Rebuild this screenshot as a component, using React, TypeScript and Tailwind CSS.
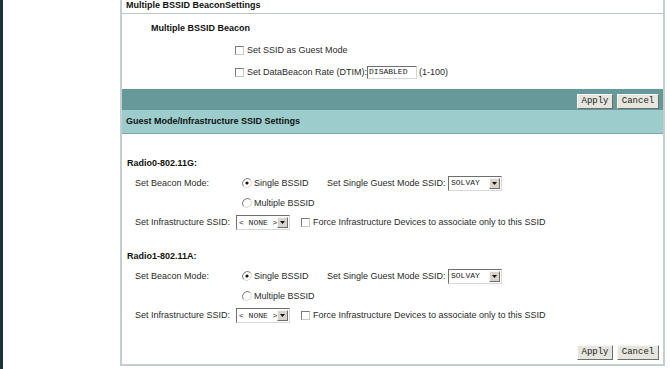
import React from 'react';

const Check = () => (
  <span className="inline-block w-[9px] h-[9px] shrink-0 border border-t-[#7a7a7a] border-l-[#7a7a7a] border-r-[#c8c8c8] border-b-[#c8c8c8] bg-white" />
);

const Radio = ({ checked }: { checked?: boolean }) => (
  <svg width="10" height="10" viewBox="0 0 12 12" className="shrink-0">
    <circle cx="6" cy="6" r="5" fill="#fff" />
    <path d="M10.2 1.8 A6 6 0 0 0 1.8 10.2" stroke="#7a7a7a" strokeWidth="1.2" fill="none" />
    <path d="M1.8 10.2 A6 6 0 0 0 10.2 1.8" stroke="#d8d8d8" strokeWidth="1.2" fill="none" />
    {checked && <circle cx="6" cy="6" r="1.9" fill="#111" />}
  </svg>
);

const Select = ({ value, className }: { value: string; className: string }) => (
  <span
    className={`inline-flex items-center h-[15px] shrink-0 border border-t-[#6e6e6e] border-l-[#6e6e6e] border-r-[#d8d8d8] border-b-[#d8d8d8] bg-white ${className}`}
  >
    <span className="flex-1 pl-[2px] whitespace-pre font-[family-name:'Liberation_Mono',monospace] text-[8px] text-[#222] leading-none">
      {value}
    </span>
    <span className="w-[11px] h-[11px] mr-[1px] shrink-0 flex items-center justify-center bg-[#d8d4cc] border border-t-[#f4f4f4] border-l-[#f4f4f4] border-r-[#6e6e6e] border-b-[#6e6e6e]">
      <svg width="5" height="3" viewBox="0 0 5 3">
        <path d="M0 0 H5 L2.5 3 Z" fill="#111" />
      </svg>
    </span>
  </span>
);

const Btn = ({ label, className }: { label: string; className: string }) => (
  <button
    className={`h-[15px] flex items-center justify-center bg-[#e6e6de] border border-t-[#fafafa] border-l-[#fafafa] border-r-[#6e6e6e] border-b-[#6e6e6e] font-[family-name:'Liberation_Mono',monospace] text-[9px] text-[#222] ${className}`}
  >
    {label}
  </button>
);

const Buttons = () => (
  <div className="flex justify-end gap-[4px] pr-[4px]">
    <Btn label="Apply" className="w-[36px]" />
    <Btn label="Cancel" className="w-[42px]" />
  </div>
);

const RadioSection = ({ title }: { title: string }) => (
  <div className="flex flex-col">
    <div className="h-[20px] flex items-center pl-[5px] font-bold text-[#111]">{title}</div>
    <div className="h-[20px] flex items-center pl-[13px]">
      <span className="w-[107px]">Set Beacon Mode:</span>
      <span className="w-[85px] flex items-center gap-[1px]">
        <Radio checked />
        <span className="ml-[1px]">Single BSSID</span>
      </span>
      <span className="w-[121px]">Set Single Guest Mode SSID:</span>
      <Select value="SOLVAY" className="w-[54px]" />
    </div>
    <div className="h-[20px] flex items-center pl-[120px]">
      <span className="flex items-center gap-[2px]">
        <Radio />
        <span>Multiple BSSID</span>
      </span>
    </div>
    <div className="h-[19px] flex items-center pl-[13px]">
      <span className="w-[101px]">Set Infrastructure SSID:</span>
      <Select value="< NONE >" className="w-[54px]" />
      <span className="ml-[11px] flex items-center gap-[2px]">
        <Check />
        <span className="ml-[1px]">Force Infrastructure Devices to associate only to this SSID</span>
      </span>
    </div>
  </div>
);

export default function App() {
  return (
    <div className="w-[670px] h-[369px] flex bg-white overflow-hidden font-[family-name:'Liberation_Sans',Arial,sans-serif] text-[9px] text-[#2a2a2a] leading-none">
      <div className="w-[3px] bg-[#173535]" />
      <div className="w-[117px]" />
      <div className="w-[545px] h-[366px] flex flex-col border-l-2 border-r-2 border-b-2 border-[#c3cfcf]">
        <div className="h-[14px] flex items-center pl-[4px] pb-[2px] font-bold text-[#111] border-b border-[#b8c8c8]">
          Multiple BSSID BeaconSettings
        </div>
        <div className="h-[75px] flex flex-col">
          <div className="h-[16px] mt-[6px] flex items-center pl-[29px] font-bold text-[#111]">
            Multiple BSSID Beacon
          </div>
          <div className="h-[16px] mt-[6px] flex items-center gap-[2px] pl-[113px]">
            <Check />
            <span className="ml-[1px]">Set SSID as Guest Mode</span>
          </div>
          <div className="h-[16px] mt-[6px] flex items-center pl-[113px]">
            <Check />
            <span className="ml-[3px]">Set DataBeacon Rate (DTIM):</span>
            <span className="w-[50px] h-[13px] flex items-center border border-t-[#6e6e6e] border-l-[#6e6e6e] border-r-[#d8d8d8] border-b-[#d8d8d8] bg-white pl-[1px] font-[family-name:'Liberation_Mono',monospace] text-[8px] text-[#222]">
              DISABLED
            </span>
            <span className="ml-[2px]">(1-100)</span>
          </div>
        </div>
        <div className="h-[21px] flex items-center justify-end bg-[#669999] pt-[3px]">
          <Buttons />
        </div>
        <div className="h-[24px] flex items-center pl-[4px] bg-[#9ccccc] border-b border-[#7fa9a9] font-bold text-[#111]">
          Guest Mode/Infrastructure SSID Settings
        </div>
        <div className="flex flex-col pt-[19px]">
          <RadioSection title="Radio0-802.11G:" />
          <div className="h-[14px]" />
          <RadioSection title="Radio1-802.11A:" />
        </div>
        <div className="mt-[20px]">
          <Buttons />
        </div>
      </div>
    </div>
  );
}
